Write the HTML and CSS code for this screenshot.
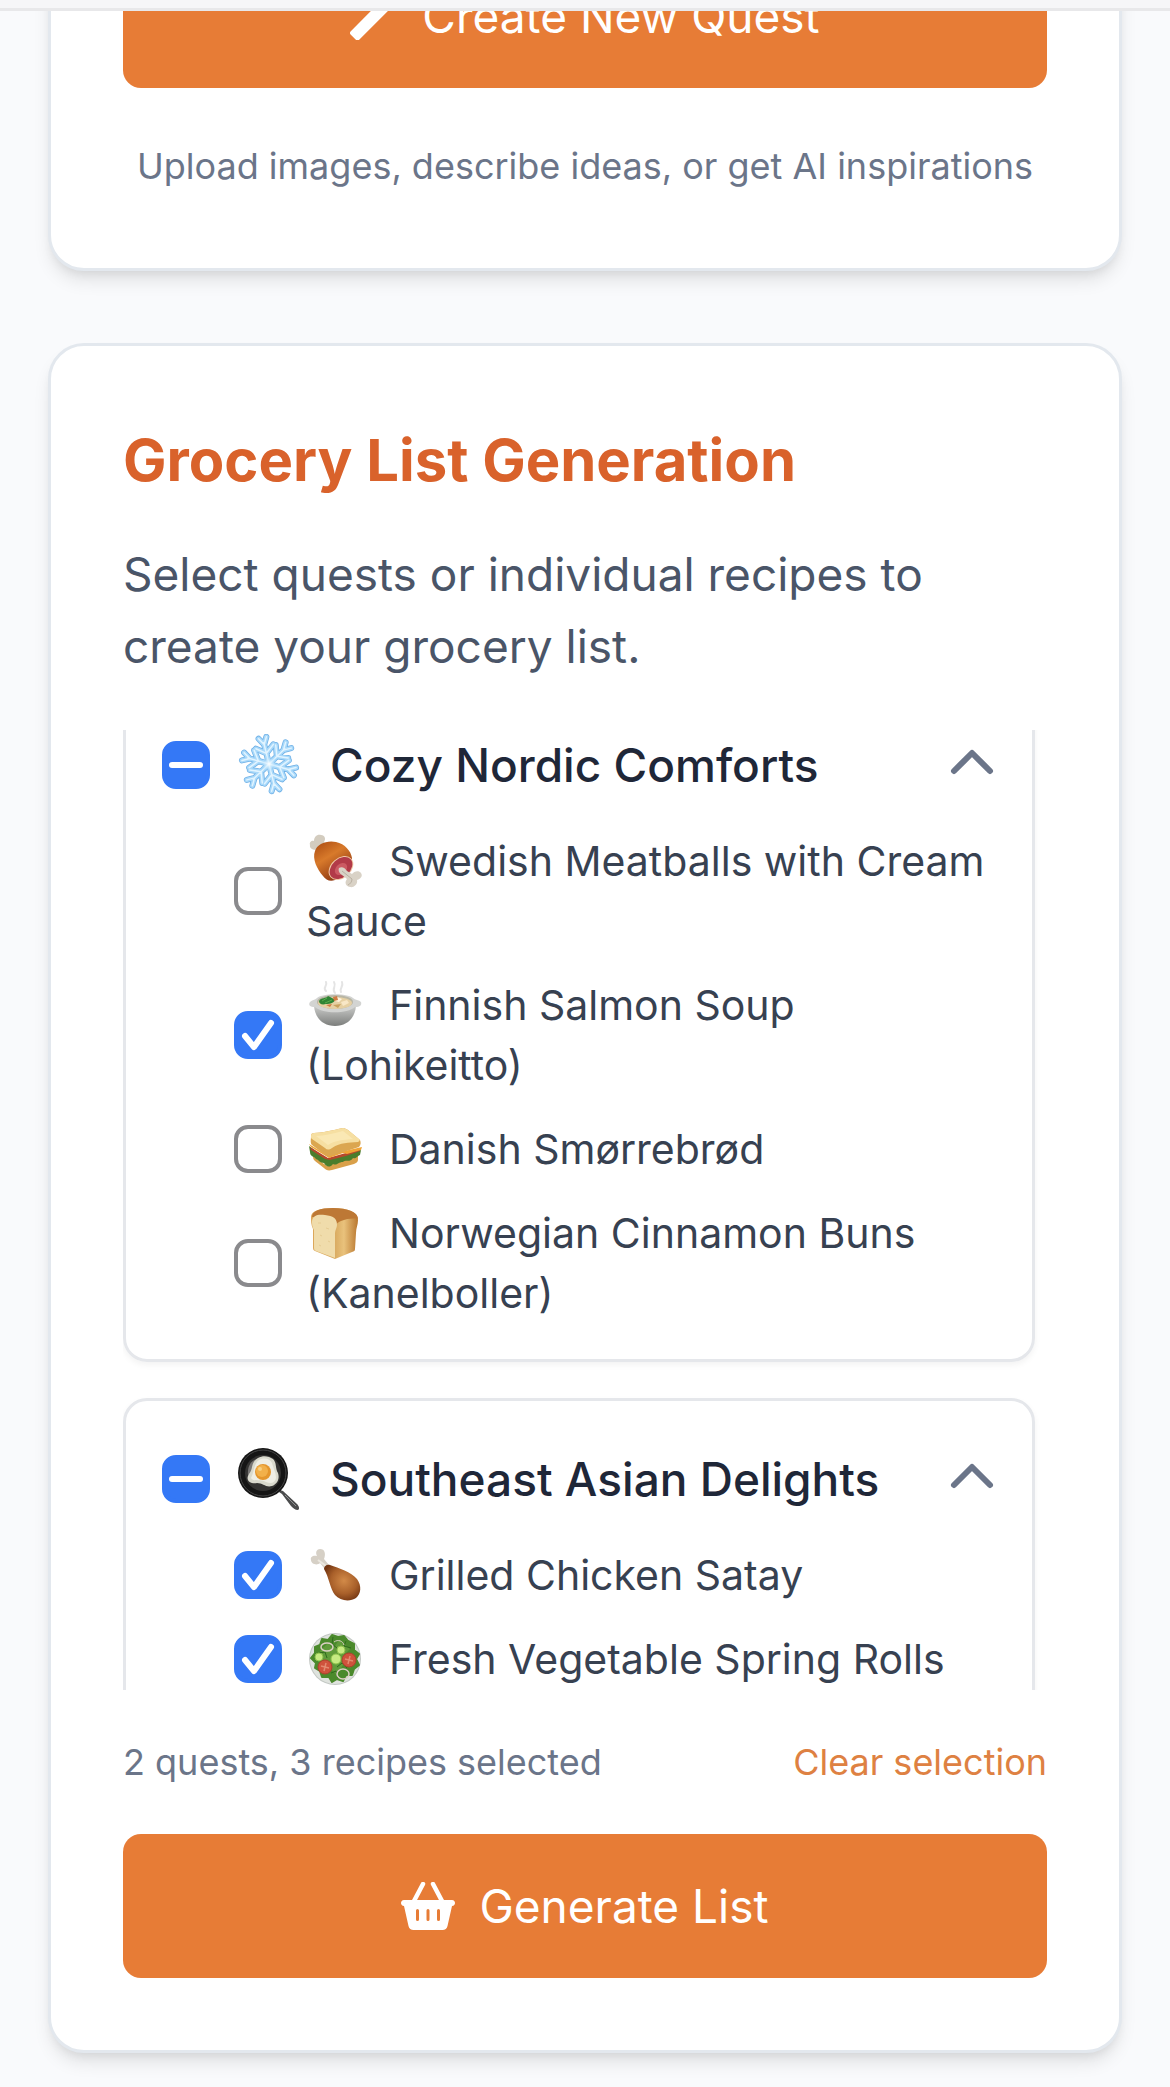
FILE: index.html
```html
<!DOCTYPE html>
<html lang="en">

<head>
    <meta charset="UTF-8">
    <meta name="viewport" content="width=device-width, initial-scale=1.0">
    <title>Recipe Quests</title>
    <link rel="stylesheet" href="styles.css">
</head>

<body>
    <header class="top-bar"></header>

    <main class="page">
        <!-- New quest -->
        <section class="card">
            <button type="button" class="btn-primary">
                <svg class="btn-icon" viewBox="0 0 48 48" aria-hidden="true">
                    <path d="M2 41L7.500 46.500L46 8L40.500 2Z" fill="#fff" stroke="#fff" stroke-width="4" stroke-linejoin="round" />
                </svg>
                Create New Quest
            </button>
            <p class="hint">Upload images, describe ideas, or get AI inspirations</p>
        </section>

        <!-- Grocery list -->
        <section class="card">
            <h2 class="card-title">Grocery List Generation</h2>
            <p class="card-text">Select quests or individual recipes to create your grocery list.</p>

            <div class="quest-list" id="questList">
                <article class="quest">
                    <div class="quest-header">
                        <input type="checkbox" class="checkbox partial" id="nordic">
                        <label for="nordic" class="quest-name">
                            <svg class="quest-icon" viewBox="0 0 62 62" aria-hidden="true">
                                <defs>
                                    <g id="arm">
                                        <path d="M31 30V8M31 19L22 12M31 19L40 12M31 10L27 3M31 10L35 3" />
                                    </g>
                                    <g id="flake">
                                        <use href="#arm" />
                                        <use href="#arm" transform="rotate(60 31 30)" />
                                        <use href="#arm" transform="rotate(120 31 30)" />
                                        <use href="#arm" transform="rotate(180 31 30)" />
                                        <use href="#arm" transform="rotate(240 31 30)" />
                                        <use href="#arm" transform="rotate(300 31 30)" />
                                    </g>
                                    <radialGradient id="ice">
                                        <stop offset="0" stop-color="#fff" />
                                        <stop offset="1" stop-color="#8fd0fa" stop-opacity="0" />
                                    </radialGradient>
                                </defs>
                                <g transform="rotate(-14 31 30)" fill="none" stroke-linecap="round" stroke-linejoin="round">
                                    <use href="#flake" stroke="#6fb0e6" stroke-width="6" />
                                    <use href="#flake" stroke="#a9d9fa" stroke-width="4.500" />
                                    <use href="#flake" stroke="#e2f4ff" stroke-width="1.500" />
                                </g>
                                <circle cx="31" cy="30" r="9" fill="url(#ice)" />
                            </svg>
                            Cozy Nordic Comforts
                        </label>
                        <button type="button" class="toggle-btn" aria-label="Collapse Cozy Nordic Comforts">
                            <svg viewBox="0 0 48 48" aria-hidden="true"><path d="M6 30L24 12L42 30" /></svg>
                        </button>
                    </div>
                    <ul class="recipes">
                        <li>
                            <input type="checkbox" class="checkbox" id="meatballs">
                            <label for="meatballs"><svg class="recipe-icon" viewBox="0 0 54 54" aria-hidden="true">
                                <defs>
                                    <linearGradient id="ham" x1="0" y1="0" x2=".6" y2="1">
                                        <stop offset="0" stop-color="#a8480f" />
                                        <stop offset=".45" stop-color="#d87a2b" />
                                        <stop offset="1" stop-color="#8a3410" />
                                    </linearGradient>
                                </defs>
                                <path d="M15 15L10 15C7 17 1 15 2 11C1 8 4 6 6 7C6 3 9 0 13 1C17 1 18 5 16 8L19 12Z" fill="#d3ccbf" />
                                <path d="M7 17C9 10 19 6 28 8C37 10 43 17 44 24C44 31 38 42 27 46C22 48 18 46 15 42C9 35 4 25 7 17Z" fill="url(#ham)" />
                                <ellipse cx="33" cy="34" rx="14" ry="10" transform="rotate(-42 33 34)" fill="#f0c9a8" />
                                <ellipse cx="33" cy="34" rx="13" ry="9" transform="rotate(-42 33 34)" fill="#b23a48" />
                                <ellipse cx="33" cy="35" rx="7" ry="5" transform="rotate(-42 33 35)" fill="#cb5a63" />
                                <path d="M31 34C34 32 37 34 39 37L44 40C46 37 51 36 53 39C55 42 53 45 49 46C50 50 46 54 42 53C38 52 36 49 39 45L34 41C31 39 30 36 31 34Z" fill="#d9d2c6" />
                                <path d="M34 37L44 45C44 48 42 50 40 51" fill="none" stroke="#b9b0a2" stroke-width="1" />
                            </svg>Swedish Meatballs with Cream Sauce</label>
                        </li>
                        <li>
                            <input type="checkbox" class="checkbox" id="soup" checked>
                            <label for="soup"><svg class="recipe-icon" viewBox="0 0 54 54" aria-hidden="true">
                                <defs>
                                    <linearGradient id="bowl" x1="0" y1="0" x2="0" y2="1">
                                        <stop offset="0" stop-color="#c9cac8" />
                                        <stop offset="1" stop-color="#7c7e7c" />
                                    </linearGradient>
                                </defs>
                                <path d="M18 13C14 9 20 8 18 4M27 15C23 10 29 9 26 4M33 14C31 10 36 9 34 4" fill="none" stroke="#d9d9d9" stroke-width="2" stroke-linecap="round" opacity=".7" />
                                <path d="M6 28C7 40 15 48 27 48C39 48 47 40 48 28Z" fill="url(#bowl)" />
                                <path d="M2 24C4 22 7 22 9 20C15 15 39 15 45 20C47 22 51 22 53 24C54 27 52 29 47 29C39 36 15 36 7 29C2 29 0 27 2 24Z" fill="#d3d4d2" />
                                <ellipse cx="27" cy="24" rx="18" ry="7" fill="#b9b6a4" />
                                <ellipse cx="27" cy="25" rx="17" ry="6" fill="#e6d0a3" />
                                <path d="M11 23C13 19 18 21 20 18C23 19 25 21 27 21C27 25 22 26 18 26C14 27 11 26 11 23Z" fill="#2f8434" />
                                <path d="M14 23L19 20M17 25L24 22" stroke="#58ac4b" stroke-width="1" />
                                <path d="M29 19L34 21L31 24L27 23Z" fill="#fff3db" />
                                <path d="M33 24L39 22L41 25L35 28Z" fill="#f8e7c6" />
                                <path d="M25 19L29 18L30 22L26 23ZM18 27L24 26L22 29Z" fill="#cf7b43" />
                                <path d="M25 27L33 26L30 30Z" fill="#c9a15d" />
                            </svg>Finnish Salmon Soup (Lohikeitto)</label>
                        </li>
                        <li>
                            <input type="checkbox" class="checkbox" id="smorrebrod">
                            <label for="smorrebrod"><svg class="recipe-icon" viewBox="0 0 54 54" aria-hidden="true">
                                <path d="M5 34L19 44L50 33V38C50 40 48 41 46 42L24 48C20 49 18 48 16 46L7 39C5 37 5 36 5 34Z" fill="#d9a04a" />
                                <path d="M1 24L19 37L53 28L52 33C48 35 48 37 45 36C42 41 38 37 35 40C30 40 29 44 25 42C22 46 18 45 16 41C12 41 11 38 8 37C6 34 2 35 2 30Z" fill="#4a7d2c" />
                                <path d="M2 25L20 36L52 27L52 29L38 34L22 38L17 37L3 28Z" fill="#b5482c" />
                                <path d="M1 22L19 33L54 25L53 28L39 32L35 31L21 36L3 25Z" fill="#f0a436" />
                                <path d="M3 14C3 12 4 11 6 11C14 11 25 8 35 6C37 6 38 7 40 8L52 18C53 20 53 23 51 25L23 34C20 35 18 34 16 32L4 23C2 21 3 18 3 14Z" fill="#dba650" />
                                <path d="M3 14C3 12 4 11 6 11C14 11 25 8 35 6C37 6 38 7 40 8L51 17C52 18 52 19 50 20C40 21 33 20 24 26C21 28 19 28 17 26L4 17C3 16 3 16 3 14Z" fill="#f6dfa2" />
                                <path d="M8 14C17 14 26 11 35 9L45 17C35 18 28 18 20 23Z" fill="#fae8b4" />
                            </svg>Danish Smørrebrød</label>
                        </li>
                        <li>
                            <input type="checkbox" class="checkbox" id="buns">
                            <label for="buns"><svg class="recipe-icon" viewBox="0 0 54 54" aria-hidden="true">
                                <defs>
                                    <linearGradient id="crust" x1="0" y1="0" x2="1" y2="0">
                                        <stop offset="0" stop-color="#dca75a" />
                                        <stop offset=".5" stop-color="#d9aa60" />
                                        <stop offset=".7" stop-color="#e9c27c" />
                                        <stop offset="1" stop-color="#b9772f" />
                                    </linearGradient>
                                </defs>
                                <path d="M3 11C3 5 12 2 25 2C40 2 50 6 50 14C50 19 48 22 48 27L47 43C47 45 46 45 44 46L27 53L7 45C5 44 5 43 5 41L5 23C3 19 3 15 3 11Z" fill="url(#crust)" />
                                <path d="M4 11C4 5 12 2 25 2C40 2 50 6 50 13C48 12 39 12 33 15C30 16 28 18 27 20L21 11L5 11Z" fill="#bd7835" />
                                <path d="M4 15C5 9 10 8 17 9C25 10 29 12 29 19C29 22 27 24 27 27L27 52L8 45C6 44 6 43 6 41V24C4 21 4 18 4 15Z" fill="#f0dcab" />
                                <path d="M10 17L13 17M18 22L21 23M12 29L14 30M20 35L22 36M11 39L13 40" stroke="#e6cc94" stroke-width="1" />
                            </svg>Norwegian Cinnamon Buns (Kanelboller)</label>
                        </li>
                    </ul>
                </article>

                <article class="quest">
                    <div class="quest-header">
                        <input type="checkbox" class="checkbox partial" id="asian">
                        <label for="asian" class="quest-name">
                            <svg class="quest-icon" viewBox="0 0 62 62" aria-hidden="true">
                                <path d="M42 42L45 43L59 56C61 58 62 61 60 62C57 62 55 60 53 58L44 46L41 44Z" fill="#4b4c4d" />
                                <path d="M47 47L58 58" stroke="#8f9192" stroke-width="1" />
                                <circle cx="25" cy="25" r="25" fill="#151515" />
                                <circle cx="25" cy="25" r="23" fill="none" stroke="#454545" stroke-width="1" />
                                <circle cx="25" cy="25" r="18" fill="#343332" />
                                <path d="M10 27C9 18 14 11 20 11L12 30Z" fill="#777574" />
                                <path d="M20 10C25 7 31 8 35 11C39 15 37 20 40 25C42 31 39 36 34 38C28 40 25 35 19 35C13 36 8 33 10 28C12 24 13 24 14 19C15 14 17 12 20 10Z" fill="#d9d9cd" />
                                <path d="M21 12C27 9 32 11 34 15C35 20 38 24 38 30C37 35 33 36 28 34C22 31 15 34 13 30C16 25 16 15 21 12Z" fill="#efeee5" />
                                <circle cx="25" cy="24" r="8" fill="#e4962d" />
                                <circle cx="24" cy="23" r="6" fill="#f2b04a" />
                                <circle cx="22" cy="21" r="2" fill="#f8cf80" />
                            </svg>
                            Southeast Asian Delights
                        </label>
                        <button type="button" class="toggle-btn" aria-label="Collapse Southeast Asian Delights">
                            <svg viewBox="0 0 48 48" aria-hidden="true"><path d="M6 30L24 12L42 30" /></svg>
                        </button>
                    </div>
                    <ul class="recipes">
                        <li>
                            <input type="checkbox" class="checkbox" id="satay" checked>
                            <label for="satay"><svg class="recipe-icon" viewBox="0 0 54 54" aria-hidden="true">
                                <defs>
                                    <radialGradient id="leg" cx=".55" cy=".45" r=".6">
                                        <stop offset="0" stop-color="#d28a48" />
                                        <stop offset=".6" stop-color="#a9602a" />
                                        <stop offset="1" stop-color="#743612" />
                                    </radialGradient>
                                </defs>
                                <path d="M16 20L12 15C9 18 3 16 3 12C2 9 5 7 9 8C7 4 9 1 12 1C17 1 18 6 16 11L21 17Z" fill="#d6d0c6" />
                                <path d="M10 12L18 18" stroke="#ece8e0" stroke-width="2" />
                                <path d="M16 21C16 18 19 16 22 17C31 20 43 24 49 31C54 38 53 46 48 50C42 54 32 53 27 47C22 41 21 29 16 21Z" fill="url(#leg)" />
                            </svg>Grilled Chicken Satay</label>
                        </li>
                        <li>
                            <input type="checkbox" class="checkbox" id="rolls" checked>
                            <label for="rolls"><svg class="recipe-icon" viewBox="0 0 54 54" aria-hidden="true">
                                <circle cx="27" cy="27" r="26" fill="#c3c8c4" />
                                <circle cx="27" cy="27" r="25" fill="#dfe3de" />
                                <path d="M14 7L20 8L24 3L30 5L36 4L40 9L46 12L46 18L51 22L48 27L51 33L46 37L44 43L38 43L35 49L29 47L24 50L21 45L14 45L12 39L7 36L8 31L3 26L7 21L7 15L12 13Z" fill="#4b8a2c" stroke="#4b8a2c" stroke-width="2" stroke-linejoin="round" />
                                <path d="M12 19L20 11L25 17L31 8L36 12L42 17L36 23L43 36L35 33L29 43L24 38L23 31L15 28Z" fill="#609b3a" />
                                <path d="M25 5L24 12L29 16M38 9L36 14L43 16M11 21L17 20L19 26M29 35L34 31L39 36M23 41L28 39L30 46" fill="none" stroke="#2f6a1d" stroke-width="1" />
                                <ellipse cx="19" cy="15" rx="6" ry="4" fill="none" stroke="#dccfc4" stroke-width="1.500" />
                                <ellipse cx="35" cy="42" rx="6" ry="5" fill="none" stroke="#dccfc4" stroke-width="1.500" />
                                <path d="M26 10C30 7 35 9 36 13" fill="none" stroke="#dccfc4" stroke-width="1" />
                                <g fill="#c7ea82" stroke="#8fc24c" stroke-width="1">
                                    <circle cx="28" cy="27" r="5" />
                                    <circle cx="33" cy="18" r="4" />
                                    <circle cx="11" cy="25" r="4" />
                                </g>
                                <g fill="#cf523c" stroke="#b0402c" stroke-width="1">
                                    <circle cx="17" cy="35" r="7" />
                                    <circle cx="41" cy="28" r="7" />
                                </g>
                                <path d="M13 34L21 36M18 31L16 39M37 27L45 29M42 24L40 32" stroke="#e38a70" stroke-width="1.500" />
                            </svg>Fresh Vegetable Spring Rolls</label>
                        </li>
                    </ul>
                </article>
            </div>

            <div class="summary">
                <span>2 quests, 3 recipes selected</span>
                <button type="button" class="clear-btn">Clear selection</button>
            </div>

            <button type="button" class="btn-primary">
                <svg class="btn-icon basket" viewBox="0 0 54 48" aria-hidden="true">
                    <path d="M22 2L13 19M32 2L41 19" fill="none" stroke="#fff" stroke-width="4.500" stroke-linecap="round" />
                    <path fill="#fff" fill-rule="evenodd" d="M3 18H51C55 18 55 24 51 24L46.500 44C46 46.500 44 48 41.500 48H12.500C10 48 8 46.500 7.500 44L3 24C-1 24-1 18 3 18ZM18 28.500a1.500 1.500 0 0 0-3 0V37.500a1.500 1.500 0 0 0 3 0ZM28.500 28.500a1.500 1.500 0 0 0-3 0V37.500a1.500 1.500 0 0 0 3 0ZM39 28.500a1.500 1.500 0 0 0-3 0V37.500a1.500 1.500 0 0 0 3 0Z" />
                </svg>
                Generate List
            </button>
        </section>
    </main>

    <script>
        document.querySelectorAll('.partial').forEach((box) => {
            box.indeterminate = true;
        });

        // Keep the first quest header at the top of the list
        document.getElementById('questList').scrollTop = 46;
    </script>
</body>

</html>
```
FILE: styles.css
```css
/* Global Styles */
:root {
    --primary-color: #e77c36;
    --title-color: #d9622b;
    --border-color: #e5e7eb;
    --muted-color: #6b7589;
    --checkbox-color: #3478f6;
    --background-color: #f9fafc;
}

* {
    margin: 0;
    padding: 0;
    box-sizing: border-box;
}

body {
    background-color: var(--background-color);
    font-family: Inter, system-ui, sans-serif;
    font-size: 41px;
    line-height: 60px;
    overflow-x: hidden;
}

button {
    font-family: inherit;
    border: none;
    background: none;
    cursor: pointer;
}

.top-bar {
    position: sticky;
    top: 0;
    z-index: 10;
    height: 11px;
    background-color: #f6f6f8;
    border-bottom: 3px solid #e8e8ea;
}

.page {
    display: flex;
    flex-direction: column;
    gap: 72px;
    margin-top: -142px;
    padding: 0 48px 34px;
}

/* Cards */
.card {
    background-color: white;
    border: 3px solid #e3e8ee;
    border-radius: 36px;
    padding: 72px;
    box-shadow: 0 12px 18px -3px rgba(0, 0, 0, 0.1), 0 6px 12px -6px rgba(0, 0, 0, 0.1);
}

.card-title {
    font-size: 58px;
    line-height: 84px;
    font-weight: 700;
    color: var(--title-color);
    margin-bottom: 36px;
}

.card-text {
    font-size: 46px;
    line-height: 72px;
    color: #4a5568;
    margin-bottom: 48px;
}

.hint {
    font-size: 36px;
    color: var(--muted-color);
    text-align: center;
    margin-top: 48px;
}

/* Buttons */
.btn-primary {
    display: flex;
    align-items: center;
    justify-content: center;
    gap: 24px;
    width: 100%;
    padding: 36px;
    border-radius: 18px;
    background-color: var(--primary-color);
    color: white;
    font-size: 46px;
    line-height: 72px;
}

.btn-icon {
    width: 48px;
    height: 48px;
}

.basket {
    width: 54px;
}

/* Quest list */
.quest-list {
    display: flex;
    flex-direction: column;
    gap: 36px;
    max-height: 960px;
    padding-right: 12px;
    overflow-y: auto;
    scrollbar-width: none;
}

.quest {
    flex-shrink: 0;
    padding: 36px;
    border: 3px solid var(--border-color);
    border-radius: 24px;
    box-shadow: 0 3px 6px rgba(0, 0, 0, 0.05);
}

.quest-header {
    display: flex;
    align-items: center;
    gap: 24px;
    height: 84px;
}

.quest-name {
    display: flex;
    flex: 1;
    align-items: center;
    gap: 30px;
    padding-left: 4px;
    font-size: 46px;
    font-weight: 500;
    color: #1f2738;
    white-space: nowrap;
}

.quest-icon {
    width: 62px;
    height: 62px;
}

.toggle-btn,
.toggle-btn svg {
    display: block;
    width: 48px;
    height: 48px;
}

.toggle-btn path {
    fill: none;
    stroke: var(--muted-color);
    stroke-width: 6;
    stroke-linecap: round;
    stroke-linejoin: round;
}

.recipes {
    display: flex;
    flex-direction: column;
    gap: 24px;
    margin-top: 24px;
    padding-left: 72px;
    list-style: none;
}

.recipes li {
    display: flex;
    align-items: center;
    gap: 24px;
    color: #374151;
}

.recipe-icon {
    width: 54px;
    height: 54px;
    margin: 0 27px 0 2px;
    vertical-align: -12px;
}

/* Checkboxes */
.checkbox {
    appearance: none;
    flex-shrink: 0;
    width: 48px;
    height: 48px;
    border: 4px solid #8a8a8d;
    border-radius: 14px;
    background: white center / 48px no-repeat;
}

.checkbox:checked,
.checkbox:indeterminate {
    border-color: var(--checkbox-color);
    background-color: var(--checkbox-color);
}

.checkbox:checked {
    background-image: url("data:image/svg+xml,%3Csvg xmlns='http://www.w3.org/2000/svg' viewBox='0 0 48 48'%3E%3Cpath d='M11 25L20 36L37 12' fill='none' stroke='white' stroke-width='6' stroke-linecap='round' stroke-linejoin='round'/%3E%3C/svg%3E");
}

.checkbox:indeterminate {
    background-image: url("data:image/svg+xml,%3Csvg xmlns='http://www.w3.org/2000/svg' viewBox='0 0 48 48'%3E%3Cpath d='M10 24H38' fill='none' stroke='white' stroke-width='6' stroke-linecap='round'/%3E%3C/svg%3E");
}

/* Selection summary */
.summary {
    display: flex;
    align-items: center;
    justify-content: space-between;
    margin: 48px 0;
    font-size: 36px;
    line-height: 48px;
    color: var(--muted-color);
}

.clear-btn {
    font-size: 36px;
    line-height: 48px;
    color: #de8142;
}
```
